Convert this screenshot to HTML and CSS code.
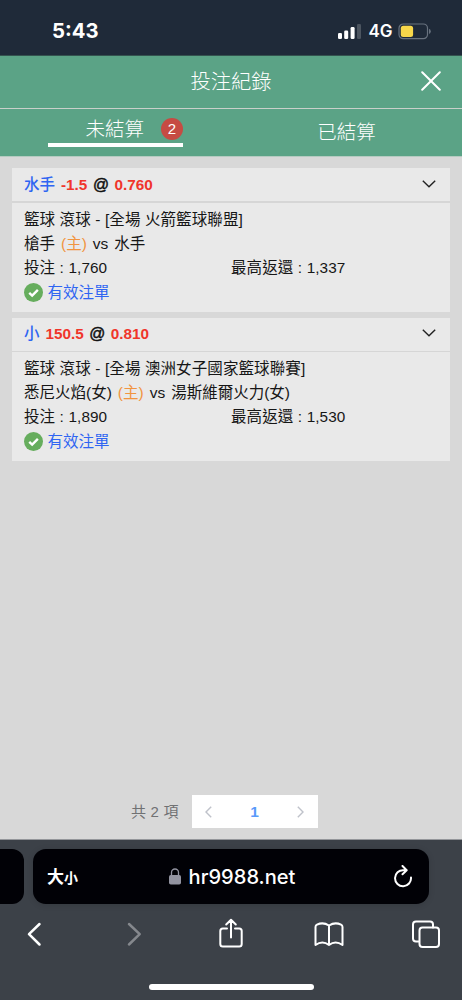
FILE: index.html
```html
<!DOCTYPE html>
<html lang="zh-Hant">
<head>
<meta charset="utf-8">
<title>投注紀錄</title>
<link rel="stylesheet" href="styles.css">
</head>
<body>
<div class="phone">
  <div class="status">
    <span class="clock">5:43</span>
    <div class="indicators">
      <svg class="signal" width="23" height="15" viewBox="0 0 23 15"><rect x="0" y="9" width="4" height="6" rx="1.3"/><rect x="6.2" y="6.5" width="4" height="8.500" rx="1.3"/><rect x="12.600" y="3" width="4" height="12" rx="1.3"/><rect class="dim" x="19" y="0" width="4" height="15" rx="1.3"/></svg>
      <span class="network">4G</span>
      <svg class="battery" width="34" height="17" viewBox="0 0 34 17"><rect x="1" y="1" width="28.500" height="14.700" rx="4.200" fill="none" stroke="#68727f" stroke-width="1.200"/><rect x="2.800" y="2.700" width="12.300" height="11.300" rx="2.500" fill="#f8d74a"/><path d="M31 5.800q1.800.8 1.800 2.600t-1.800 2.600z" fill="#68727f"/></svg>
    </div>
  </div>
  <header class="header">
    <h1 class="title">投注紀錄</h1>
    <svg class="close" width="20" height="20" viewBox="0 0 20 20"><path d="M1.200 1.200 18.800 18.800M18.800 1.200 1.200 18.800"/></svg>
  </header>
  <nav class="tabs">
    <div class="tab"><div class="active"><span>未結算</span><span class="badge">2</span></div></div>
    <div class="tab tab-settled">已結算</div>
  </nav>
  <main class="content">
    <section class="card">
      <div class="card-head"><span class="pick">水手</span><span class="odds">-1.5</span><span class="at">@</span><span class="odds">0.760</span>
        <svg class="chevron" width="14" height="8" viewBox="0 0 14 8"><path d="M.8.8 7 6.800 13.200.8"/></svg></div>
      <div class="card-body">
        <p class="line">籃球 滾球 - [全場 火箭籃球聯盟]</p>
        <p class="line teams"><span>槍手</span><span class="home">(主)</span><span>vs</span><span>水手</span></p>
        <p class="line amounts"><span>投注 : <b>1,760</b></span><span>最高返還 : <b>1,337</b></span></p>
        <p class="line valid"><svg width="19" height="19" viewBox="0 0 20 20"><circle cx="10" cy="10" r="10" fill="#66ad5d"/><path d="m5.500 10.400 3.100 2.900 6-6.100" fill="none" stroke="#fff" stroke-width="2.500"/></svg><span>有效注單</span></p>
      </div>
    </section>
    <section class="card second">
      <div class="card-head"><span class="pick">小</span><span class="odds">150.5</span><span class="at">@</span><span class="odds">0.810</span>
        <svg class="chevron" width="14" height="8" viewBox="0 0 14 8"><path d="M.8.8 7 6.800 13.200.8"/></svg></div>
      <div class="card-body">
        <p class="line">籃球 滾球 - [全場 澳洲女子國家籃球聯賽]</p>
        <p class="line teams"><span>悉尼火焰(女)</span><span class="home">(主)</span><span>vs</span><span>湯斯維爾火力(女)</span></p>
        <p class="line amounts"><span>投注 : <b>1,890</b></span><span>最高返還 : <b>1,530</b></span></p>
        <p class="line valid"><svg width="19" height="19" viewBox="0 0 20 20"><circle cx="10" cy="10" r="10" fill="#66ad5d"/><path d="m5.500 10.400 3.100 2.900 6-6.100" fill="none" stroke="#fff" stroke-width="2.500"/></svg><span>有效注單</span></p>
      </div>
    </section>
    <div class="pagination">
      <span class="total">共 2 項</span>
      <div class="pager">
        <svg width="7" height="12" viewBox="0 0 7 12"><path d="M6.200.8 1 6l5.200 5.200"/></svg>
        <span class="page">1</span>
        <svg width="7" height="12" viewBox="0 0 7 12"><path d="M.8.8 6 6 .8 11.200"/></svg>
      </div>
    </div>
  </main>
  <footer class="browser">
    <div class="address-row">
      <div class="previous-tab"></div>
      <div class="address">
        <span class="text-size">大<small>小</small></span>
        <div class="domain"><svg width="12" height="17" viewBox="0 0 12 17"><rect y="7" width="12" height="9.500" rx="1.800" fill="#9293a0"/><path d="M2.500 8V4.500a3.500 3.500 0 0 1 7 0V8" fill="none" stroke="#9293a0" stroke-width="1.300"/></svg><span>hr9988.net</span></div>
        <svg class="reload" width="20" height="23" viewBox="0 0 20 23"><path d="M13.200 5.200H10.500A8 8 0 1 0 18 12.500M9.500 1l4.200 4.200L9.500 9.200"/></svg>
      </div>
    </div>
    <div class="toolbar">
      <svg width="28" height="32" viewBox="0 0 28 32"><path d="M19.500 6 9 16.200l10.500 10.300" stroke-width="2.500"/></svg>
      <svg class="forward" width="28" height="32" viewBox="0 0 28 32"><path d="M9 6l10.700 10.200L9 26.500" stroke-width="2.500"/></svg>
      <svg width="28" height="32" viewBox="0 0 28 32"><path d="M10 10.500H5.800q-2.500 0-2.500 2.500v13q0 2.500 2.500 2.500h16.400q2.500 0 2.500-2.500V13q0-2.500-2.500-2.500H18M14 19.500V2M9.200 6.500 14 1.700l4.800 4.800"/></svg>
      <svg width="30" height="32" viewBox="0 0 30 32"><path d="M15 27q-6.500-5-13.500 0V9q0-1.500 1.500-2.300 6-3 12 .8 6-3.800 12-.8 1.500.8 1.500 2.300v18q-7-5-13.500 0zM15 7.500V27"/></svg>
      <svg class="tabs-icon" width="30" height="32" viewBox="0 0 30 32"><path d="M7.500 23.500H5q-3 0-3-3V6.500q0-3 3-3h14q3 0 3 3v3"/><rect x="8.500" y="9.500" width="19.500" height="19.500" rx="3"/></svg>
    </div>
    <div class="home-indicator"></div>
  </footer>
</div>
</body>
</html>
```
FILE: styles.css
```css
* { box-sizing: border-box; }
body { margin: 0; font-family: "Liberation Sans", "Noto Sans CJK TC", sans-serif; background: #d8d8d8; }
svg { display: block; flex: none; }
h1, p { margin: 0; font-weight: 400; }
.phone { width: 462px; height: 1000px; display: flex; flex-direction: column; overflow: hidden; white-space: nowrap; }
.status { height: 56px; flex: none; background: #1f2a39; color: #fff; border-bottom: 1px solid #34534f; display: flex; justify-content: space-between; padding: 19px 30px 0 52px; font-family: Inter, sans-serif; }
.clock { font-size: 20.300px; line-height: 24px; font-weight: 700; }
.indicators { display: flex; align-items: center; height: 24px; }
.signal { fill: #fff; }
.signal .dim { fill: #4c5560; }
.network { font-size: 17px; font-weight: 600; width: 23px; margin: 0 6.500px 0 7.500px; }
.header { height: 53px; flex: none; background: #5ba386; border-bottom: 1px solid #c9d0ca; color: #fff; display: grid; grid-template-columns: 1fr auto 1fr; align-items: center; padding: 0 21px; }
.title { grid-column: 2; font-size: 20.300px; font-weight: 300; line-height: 28px; }
.close { justify-self: end; margin-top: -2px; fill: none; stroke: #fff; stroke-width: 2; stroke-linecap: round; }
.tabs { height: 48px; flex: none; background: #5ba386; border-bottom: 1px solid #b5cbc1; color: #fff; display: grid; grid-template-columns: 1fr 1fr; font-size: 19.500px; font-weight: 300; }
.tab { display: flex; justify-content: center; }
.tab-settled { line-height: 46px; }
.active { width: 135px; height: 38px; border-bottom: 4px solid #fff; display: flex; align-items: center; justify-content: flex-end; gap: 17px; padding-top: 3px; }
.badge { width: 22px; height: 22px; border-radius: 50%; background: #c64b43; font-size: 15px; line-height: 22px; text-align: center; margin-top: 2px; }
.content { height: 682px; flex: none; background: #d8d8d8; padding: 11px 12px; display: flex; flex-direction: column; gap: 6px; font-size: 15.500px; color: #161616; }
.card { height: 144px; flex: none; background: #e9e9e9; }
.card.second { height: 143px; }
.card-head { height: 35px; border-bottom: 2px solid #d6d6d6; padding: 0 14px 0 12px; display: flex; align-items: center; gap: 6px; font-size: 15.300px; line-height: 20px; font-weight: 700; }
.second .card-head { height: 34px; border-bottom-width: 1px; padding-bottom: 2px; }
.pick { color: #2f65f2; font-size: 15.500px; font-weight: 500; }
.odds { color: #f0352b; }
.at { font-size: 15.800px; font-weight: 400; color: #111; -webkit-text-stroke: .5px #111; margin: 0 -.5px; }
.chevron { margin: 0 0 2px auto; fill: none; stroke: #222; stroke-width: 1.400; }
.card-body { padding: 5px 12px 0; }
.line { height: 24px; line-height: 24px; letter-spacing: .1px; }
.teams { display: flex; gap: 6px; letter-spacing: 0; }
.home { color: #f19440; }
.amounts { display: grid; grid-template-columns: 207px 1fr; }
.amounts b { font-weight: 400; font-size: 15.300px; }
.valid { color: #2f65f2; display: flex; align-items: center; gap: 4.500px; height: 26px; letter-spacing: 0; }
.valid svg { margin-bottom: 2px; }
.pagination { margin-top: auto; display: flex; align-items: center; gap: 12px; padding-left: 119px; }
.total { font-size: 15px; color: #707173; width: 49px; letter-spacing: .2px; margin-top: -2px; }
.pager { width: 126px; height: 33px; background: #fff; display: flex; align-items: center; justify-content: space-between; padding: 0 14px 0 13px; }
.pager svg { fill: none; stroke: #bfc2ca; stroke-width: 1.400; }
.page { color: #5a9bfa; font-size: 15.500px; font-weight: 700; }
.browser { height: 161px; flex: none; background: #3c4148; border-top: 1px solid #94969a; color: #fff; display: flex; flex-direction: column; }
.address-row { display: flex; gap: 9px; margin-top: 9px; }
.previous-tab { width: 24px; height: 55px; background: #010106; border-radius: 0 12px 12px 0; }
.address { width: 396px; height: 55px; background: #010106; border-radius: 13px; padding: 0 16px 0 14px; display: grid; grid-template-columns: 1fr auto 1fr; align-items: center; box-shadow: 0 1px 6px #00000022; }
.text-size { font-size: 17px; font-weight: 700; margin-top: -2px; }
.text-size small { font-size: 14px; }
.domain { display: flex; align-items: center; gap: 8px; margin-left: 4px; font-family: Inter, sans-serif; font-size: 20.100px; font-weight: 500; }
.reload { justify-self: end; fill: none; stroke: #fff; stroke-width: 2; stroke-linecap: round; stroke-linejoin: round; }
.toolbar { display: flex; gap: 69px; margin-top: 14px; padding-left: 20px; }
.toolbar svg { fill: none; stroke: #fff; stroke-width: 2; stroke-linecap: round; stroke-linejoin: round; }
.toolbar .forward { stroke: #85888d; margin-left: 3px; margin-right: -.5px; }
.toolbar .tabs-icon { margin-left: -1.500px; }
.home-indicator { width: 165px; height: 6px; border-radius: 3px; background: #fff; margin: 34px auto 0; }
```
